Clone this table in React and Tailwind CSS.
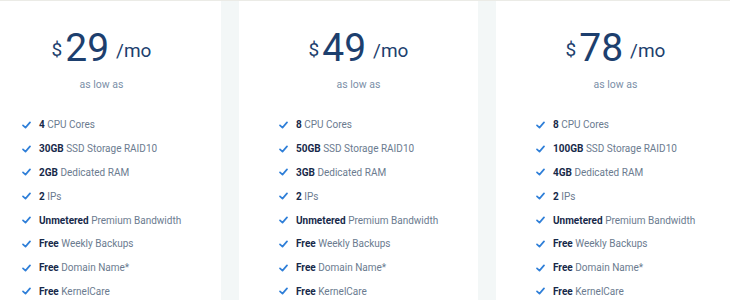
import React from 'react';

const plans = [
  {
    price: '29',
    features: [
      ['4', 'CPU Cores'],
      ['30GB', 'SSD Storage RAID10'],
      ['2GB', 'Dedicated RAM'],
      ['2', 'IPs'],
      ['Unmetered', 'Premium Bandwidth'],
      ['Free', 'Weekly Backups'],
      ['Free', 'Domain Name*'],
      ['Free', 'KernelCare'],
    ],
  },
  {
    price: '49',
    features: [
      ['8', 'CPU Cores'],
      ['50GB', 'SSD Storage RAID10'],
      ['3GB', 'Dedicated RAM'],
      ['2', 'IPs'],
      ['Unmetered', 'Premium Bandwidth'],
      ['Free', 'Weekly Backups'],
      ['Free', 'Domain Name*'],
      ['Free', 'KernelCare'],
    ],
  },
  {
    price: '78',
    features: [
      ['8', 'CPU Cores'],
      ['100GB', 'SSD Storage RAID10'],
      ['4GB', 'Dedicated RAM'],
      ['2', 'IPs'],
      ['Unmetered', 'Premium Bandwidth'],
      ['Free', 'Weekly Backups'],
      ['Free', 'Domain Name*'],
      ['Free', 'KernelCare'],
    ],
  },
];

const Check = () => (
  <svg width="9" height="8" viewBox="0 0 9 8" className="shrink-0">
    <path d="M1 4.3 L3.5 6.6 L8 1.4" fill="none" stroke="#2f7fd8" strokeWidth="1.7" strokeLinecap="round" strokeLinejoin="round" />
  </svg>
);

const PlanCard = ({ price, features }) => (
  <div className="w-[239px] shrink-0 bg-white flex flex-col">
    <div className="pt-[30px] h-[66px] flex justify-center items-start text-[#1d3f6e] font-['Roboto',sans-serif]">
      <span className="text-[19px] leading-none mt-[9px] mr-[3px]">$</span>
      <span className="text-[39px] leading-none -mt-[2px]">{price}</span>
      <span className="text-[19px] leading-none mt-[10px] ml-[7px]">/mo</span>
    </div>
    <div className="mt-[11px] h-[14px] leading-[14px] text-center text-[10.5px] text-[#7b8fa8] font-['Roboto',sans-serif]">as low as</div>
    <ul className="mt-[21px] pl-[40px] flex flex-col font-['Roboto',sans-serif] text-[10px]">
      {features.map(([b, t], i) => (
        <li key={i} className="h-[23.8px] flex items-center gap-[8px]">
          <Check />
          <span className="text-[#6b7b8f] whitespace-nowrap">
            <b className="font-bold text-[#17294a]">{b}</b> {t}
          </span>
        </li>
      ))}
    </ul>
  </div>
);

export default function App() {
  return (
    <div className="w-[730px] h-[300px] overflow-hidden bg-[#f3f7f7] border-t border-[#ebebe6]">
      <div className="flex gap-[18px] ml-[-18px]">
        {plans.map((p) => (
          <PlanCard key={p.price} {...p} />
        ))}
      </div>
    </div>
  );
}
